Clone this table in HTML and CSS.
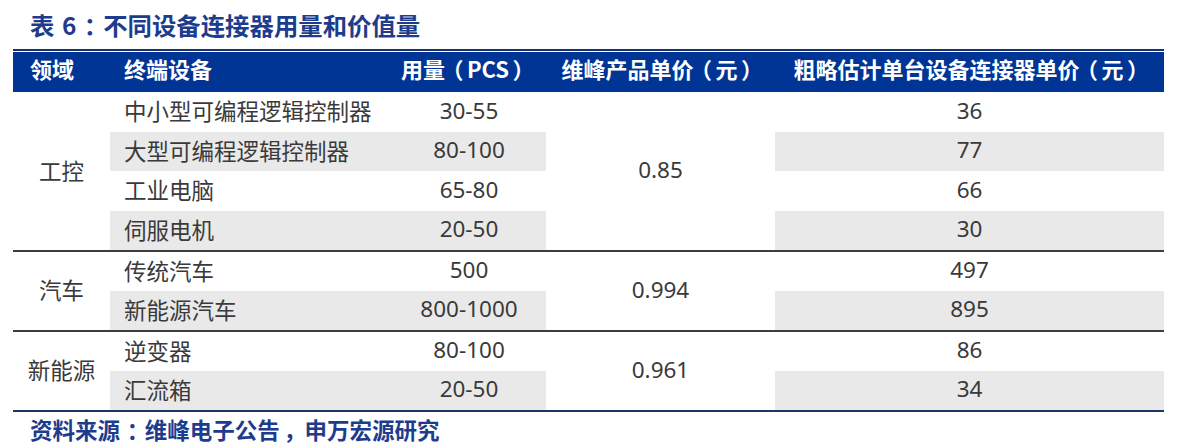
FILE: index.html
```html
<!DOCTYPE html>
<html lang="zh-CN">
<head>
<meta charset="utf-8">
<title>表 6</title>
<link rel="stylesheet" href="styles.css">
</head>
<body>
<h1 class="title">表 6<span class="cp">：</span>不同设备连接器用量和价值量</h1>
<div class="table">
  <div class="head">
    <div class="hc left pad-d">领域</div>
    <div class="hc left pad-e">终端设备</div>
    <div class="hc center">用量<span class="pl">（</span>PCS<span class="pr">）</span></div>
    <div class="hc center">维峰产品单价<span class="pl">（</span>元<span class="pr">）</span></div>
    <div class="hc center">粗略估计单台设备连接器单价<span class="pl">（</span>元<span class="pr">）</span></div>
  </div>

  <div class="group rows4">
    <div class="domain span4">工控</div>
    <div class="dev r1">中小型可编程逻辑控制器</div>
    <div class="use r1">30-55</div>
    <div class="price span4">0.85</div>
    <div class="est r1">36</div>

    <div class="dev r2 gray">大型可编程逻辑控制器</div>
    <div class="use r2 gray">80-100</div>
    <div class="est r2 gray">77</div>

    <div class="dev r3">工业电脑</div>
    <div class="use r3">65-80</div>
    <div class="est r3">66</div>

    <div class="dev r4 gray">伺服电机</div>
    <div class="use r4 gray">20-50</div>
    <div class="est r4 gray">30</div>
  </div>

  <div class="group rows2 sep">
    <div class="domain span2">汽车</div>
    <div class="dev r1">传统汽车</div>
    <div class="use r1">500</div>
    <div class="price span2">0.994</div>
    <div class="est r1">497</div>

    <div class="dev r2 gray">新能源汽车</div>
    <div class="use r2 gray">800-1000</div>
    <div class="est r2 gray">895</div>
  </div>

  <div class="group rows2 sep last">
    <div class="domain span2">新能源</div>
    <div class="dev r1">逆变器</div>
    <div class="use r1">80-100</div>
    <div class="price span2">0.961</div>
    <div class="est r1">86</div>

    <div class="dev r2 gray">汇流箱</div>
    <div class="use r2 gray">20-50</div>
    <div class="est r2 gray">34</div>
  </div>
</div>
<p class="source">资料来源<span class="cp">：</span>维峰电子公告<span class="cp">，</span>申万宏源研究</p>
</body>
</html>
```

FILE: styles.css
```css
* { box-sizing: border-box; }
html, body { margin: 0; padding: 0; background: #ffffff; }
body {
  font-family: "Noto Sans", "Noto Sans CJK SC", sans-serif;
  color: #3a3a3a;
  width: 1190px;
  height: 448px;
  overflow: hidden;
}
.title {
  margin: 0;
  padding: 8px 0 0 30px;
  height: 49px;
  line-height: 33px;
  font-size: 24.4px;
  font-weight: 700;
  color: #1e3c8e;
  font-family: "Noto Sans CJK SC", sans-serif;
  word-spacing: 2px;
}
.cp, .pl, .pr {
  font-family: "Noto Sans CJK SC", sans-serif;
  font-feature-settings: "palt" 1;
}
.cp { padding: 0 0.3em; }
.pl { padding: 0 0.2em 0 0.3em; }
.pr { padding: 0 0.3em 0 0.2em; }

.table {
  margin-left: 13px;
  width: 1151px;
  border-top: 2px solid #17306f;
}
.head, .group {
  display: grid;
  grid-template-columns: 97px 276px 160px 229px 389px;
}
.head {
  margin-top: 1px;
  height: 40px;
  background: #003595;
  color: #ffffff;
  font-family: "Noto Sans CJK SC", sans-serif;
  font-weight: 700;
  font-size: 22px;
}
.hc {
  line-height: 32px;
  white-space: nowrap;
}
.hc.left { text-align: left; }
.hc.center { text-align: center; }
.pad-d { padding-left: 17px; }
.pad-e { padding-left: 14px; }

.rows4 { grid-template-rows: repeat(4, 39.5px); }
.rows2 { grid-template-rows: repeat(2, 39px); }
.sep { border-top: 2px solid #3d3d3d; }
.last { border-bottom: 2px solid #1b3566; }

.group > div {
  font-size: 22.5px;
  display: flex;
  align-items: center;
  white-space: nowrap;
  padding-bottom: 3px;
}
.rows2 > div { padding-bottom: 4px; }
.domain { grid-column: 1; justify-content: center; font-family: "Noto Sans CJK SC", sans-serif; }
.dev { grid-column: 2; padding-left: 14px; font-family: "Noto Sans CJK SC", sans-serif; }
.use { grid-column: 3; justify-content: center; padding-left: 6px; }
.price { grid-column: 4; justify-content: center; }
.est { grid-column: 5; justify-content: center; }
.span4 { grid-row: 1 / span 4; }
.span2 { grid-row: 1 / span 2; }
.r1 { grid-row: 1; }
.r2 { grid-row: 2; }
.r3 { grid-row: 3; }
.r4 { grid-row: 4; }
.gray { background: #e9e9e9; }

.source {
  margin: 0;
  padding-left: 30px;
  height: 36px;
  line-height: 35px;
  font-size: 22.5px;
  font-weight: 700;
  color: #1e3c8e;
  font-family: "Noto Sans CJK SC", sans-serif;
}
```
